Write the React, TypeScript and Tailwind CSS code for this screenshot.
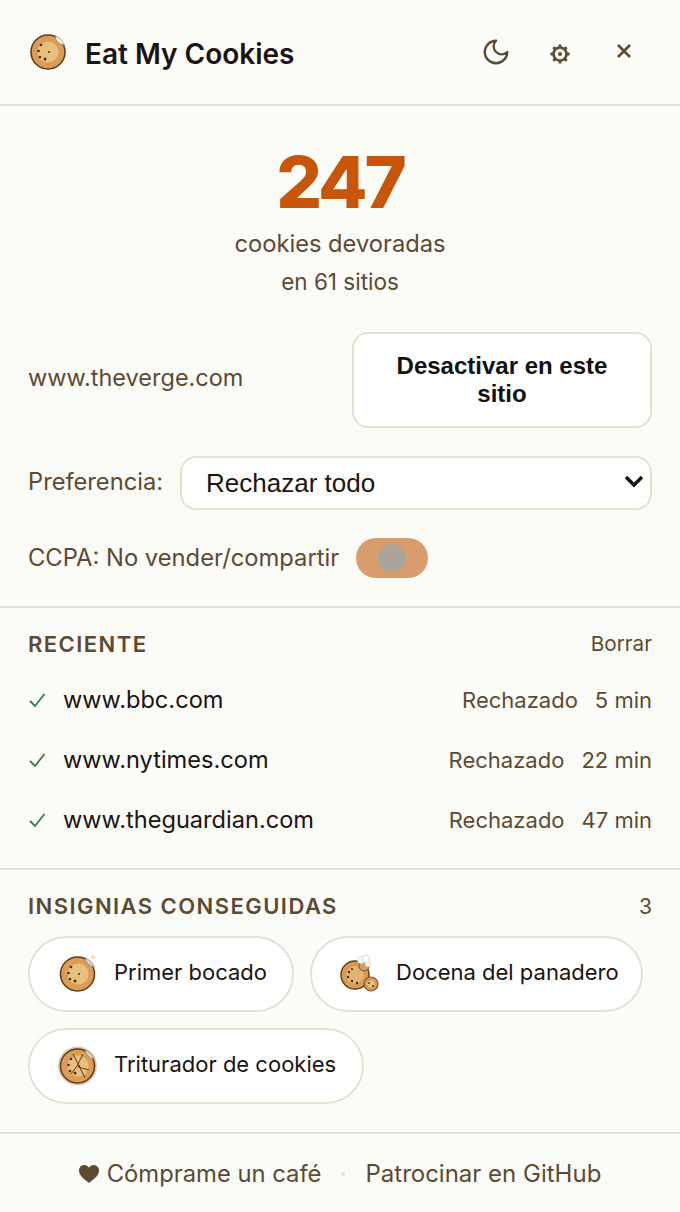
import React from "react";

function Cookie({ size = 40, variant = "plain" }: { size?: number; variant?: "plain" | "star" | "crack" }) {
  return (
    <svg width={size} height={size} viewBox="0 0 40 40" className="shrink-0">
      {variant === "crack" && <circle cx="19.500" cy="20" r="19.500" fill="#dccbb0" />}
      <circle cx={variant === "plain" ? 20 : 19.5} cy="20" r="17" fill="#dc9c55" stroke="#5c3d1e" strokeWidth="1.500" />
      <circle cx="20" cy="20" r="10.500" fill="#e8c07e" />
      <path d="M27 3.500 A17.500 17.500 0 0 1 36.500 13 A10 10 0 0 1 27 3.500 Z" fill={variant === "plain" ? "#f6f3ee" : "#d3d1cc"} stroke="#8a7760" strokeWidth="0.6" />
      {variant === "star" && <path d="M35 0l1 2.500 2.500 1-2.500 1-1 2.500-1-2.500-2.500-1 2.500-1z" fill="#f3dfaf" />}
      <g fill="#4a2d14">
        <circle cx="13" cy="13" r="1.300" />
        <circle cx="10.500" cy="19" r="1.300" />
        <circle cx="12" cy="25" r="1.300" />
        <circle cx="17" cy="27" r="1.500" />
        <circle cx="21" cy="20" r="1" />
      </g>
      {variant === "crack" && (
        <path d="M15 8l6 12 6 12M25 8L19 20l-6 8M20 21l11 3" fill="none" stroke="#5c3d1e" strokeWidth="1" />
      )}
    </svg>
  );
}

function BakerCookie() {
  return (
    <svg width="40" height="40" viewBox="0 0 40 40" className="shrink-0">
      <circle cx="15" cy="21" r="14" fill="#d99a55" stroke="#5c3d1e" strokeWidth="1.400" />
      <circle cx="15" cy="21" r="9" fill="#e3b372" />
      <g fill="#4a2d14">
        <circle cx="9" cy="18" r="1.200" />
        <circle cx="8" cy="23" r="1.200" />
        <circle cx="12" cy="27" r="1.200" />
        <circle cx="17" cy="29" r="1.200" />
        <circle cx="12" cy="15" r="1" />
      </g>
      <circle cx="24" cy="12" r="5" fill="#d99a55" stroke="#7a5630" strokeWidth="1" />
      <circle cx="21" cy="6" r="3.500" fill="#fdfcfa" stroke="#d8d2c8" strokeWidth="0.800" />
      <circle cx="26" cy="5" r="3.800" fill="#fdfcfa" stroke="#d8d2c8" strokeWidth="0.800" />
      <circle cx="28" cy="10" r="2.800" fill="#fdfcfa" stroke="#d8d2c8" strokeWidth="0.800" />
      <circle cx="31" cy="30" r="7" fill="#d99a55" stroke="#7a5630" strokeWidth="1.200" />
      <circle cx="31" cy="30" r="3.600" fill="#e9c384" />
      <circle cx="29" cy="29" r="0.900" fill="#4a2d14" />
      <circle cx="33" cy="32" r="0.900" fill="#4a2d14" />
    </svg>
  );
}

function Gear() {
  return (
    <svg width="20" height="20" viewBox="0 0 20 20" fill="none" stroke="#5c4a32">
      <circle cx="10" cy="10" r="6.500" strokeWidth="2.600" />
      <circle cx="10" cy="10" r="2" fill="#5c4a32" stroke="none" />
      <path d="M10 0.500v3.500M10 16v3.500M0.500 10h3.500M16 10h3.500M3.300 3.300l2.500 2.500M14.200 14.200l2.500 2.500M3.300 16.700l2.500-2.500M14.200 5.800l2.500-2.500" strokeWidth="2.800" />
    </svg>
  );
}

function Row({ site, time }: { site: string; time: string }) {
  return (
    <div className="flex h-[60px] items-center">
      <svg width="18" height="18" viewBox="0 0 18 18" fill="none" stroke="#2f7d46" strokeWidth="1.800" className="mr-[17px] shrink-0">
        <path d="M2 10l5 5L16.500 3" />
      </svg>
      <span className="flex-1 text-[23.600px] text-[#1c1410]">{site}</span>
      <span className="text-[22px] text-[#5c4a32]">Rechazado</span>
      <span className="ml-[17px] text-[22px] text-[#5c4a32]">{time}</span>
    </div>
  );
}

function Chip({ icon, label, pad }: { icon: React.ReactNode; label: string; pad: string }) {
  return (
    <div className={"flex h-[76px] items-center gap-[16px] rounded-full border-2 border-[#e8e0d4] bg-white pl-[28px] " + pad}>
      {icon}
      <span className="mb-[4px] text-[22px] text-[#1c1410]">{label}</span>
    </div>
  );
}

export default function App() {
  return (
    <div className="flex h-[1212px] w-[680px] flex-col overflow-hidden bg-[#fbfbf8] font-['Inter',sans-serif]">
      <header className="flex h-[106px] items-center border-b-2 border-[#e8e0d4] pl-[28px]">
        <Cookie size={40} />
        <h1 className="ml-[17px] mt-[4px] flex-1 text-[28px] font-semibold text-[#1c1410]">Eat My Cookies</h1>
        <svg width="30" height="30" viewBox="0 0 24 24" fill="none" stroke="#5c4a32" strokeWidth="1.900" strokeLinecap="round" strokeLinejoin="round" className="mr-[39px]">
          <path d="M12 3a6 6 0 0 0 9 9 9 9 0 1 1-9-9Z" />
        </svg>
        <div className="mr-[46px] mt-[4px] flex"><Gear /></div>
        <svg width="16" height="16" viewBox="0 0 16 16" fill="none" stroke="#5c4a32" strokeWidth="2.600" className="mb-[2px] mr-[48px]">
          <path d="M2 2l12 12M14 2L2 14" />
        </svg>
      </header>

      <section className="flex flex-col items-center pt-[36px]">
        <div className="text-[72px] font-extrabold leading-[80px] tracking-[-3px] text-[#c8560a]">247</div>
        <div className="mt-[4px] text-[23.700px] leading-[36px] text-[#5c4a32]">cookies devoradas</div>
        <div className="mt-[3px] text-[22.500px] leading-[34px] text-[#5c4a32]">en 61 sitios</div>
      </section>

      <section className="flex flex-col px-[28px] pt-[33px]">
        <div className="flex items-center justify-between">
          <span className="mb-[4px] text-[23.500px] text-[#5c4a32]">www.theverge.com</span>
          <button className="h-[96px] w-[300px] rounded-[16px] border-2 border-[#e8e0d4] bg-white px-[24px] font-['Liberation_Sans',sans-serif] text-[24px] font-bold leading-[28px] text-[#111]">
            Desactivar en este sitio
          </button>
        </div>
        <div className="mt-[28px] flex items-center gap-[17px]">
          <span className="mb-[2px] text-[23.700px] text-[#5c4a32]">Preferencia:</span>
          <div className="relative flex-1">
            <select className="h-[54px] w-full appearance-none rounded-[16px] border-2 border-[#e8e0d4] bg-white pl-[24px] font-['Liberation_Sans',sans-serif] text-[26px] text-[#1c1410]">
              <option>Rechazar todo</option>
            </select>
            <svg width="20" height="14" viewBox="0 0 20 14" fill="none" stroke="#1c1410" strokeWidth="3.400" className="pointer-events-none absolute right-[8px] top-[18px]">
              <path d="M2 3l8 8 8-8" />
            </svg>
          </div>
        </div>
        <div className="mt-[28px] flex items-center gap-[17px]">
          <span className="text-[23.760px] text-[#5c4a32]">CCPA: No vender/compartir</span>
          <div className="flex h-[40px] w-[72px] items-center justify-center rounded-full bg-[#d89c6d]">
            <div className="h-[28px] w-[28px] rounded-full bg-[#aaa598]" />
          </div>
        </div>
      </section>

      <section className="mt-[28px] border-t-2 border-[#e8e0d4] px-[28px] pt-[22px]">
        <div className="flex items-center justify-between">
          <h2 className="text-[22px] font-semibold leading-[28px] tracking-[1.450px] text-[#5c4a32]">RECIENTE</h2>
          <span className="text-[20.700px] leading-[28px] text-[#5c4a32]">Borrar</span>
        </div>
        <div className="mt-[12px] pb-[18px]">
          <Row site="www.bbc.com" time="5 min" />
          <Row site="www.nytimes.com" time="22 min" />
          <Row site="www.theguardian.com" time="47 min" />
        </div>
      </section>

      <section className="border-t-2 border-[#e8e0d4] px-[28px] pb-[28px] pt-[22px]">
        <div className="flex h-[28px] items-center justify-between">
          <h2 className="text-[22px] font-semibold leading-[28px] tracking-[1.450px] text-[#5c4a32]">INSIGNIAS CONSEGUIDAS</h2>
          <span className="mt-[2px] text-[21px] leading-[28px] text-[#5c4a32]">3</span>
        </div>
        <div className="mt-[16px] flex flex-wrap gap-[16px]">
          <Chip icon={<Cookie size={40} variant="star" />} label="Primer bocado" pad="pr-[25px]" />
          <Chip icon={<BakerCookie />} label="Docena del panadero" pad="pr-[22px]" />
          <Chip icon={<Cookie size={40} variant="crack" />} label="Triturador de cookies" pad="pr-[26px]" />
        </div>
      </section>

      <footer className="flex flex-1 items-center justify-center border-t-2 border-[#e8e0d4] pt-[2px] text-[23.800px] text-[#5c4a32]">
        <svg width="20" height="18" viewBox="0 0 20 18" fill="#5c4a32" className="mr-[8px]">
          <path d="M10 18C4 13.500 0 10 0 5.500 0 2.400 2.400 0 5.300 0 7.200 0 9 1 10 2.700 11 1 12.800 0 14.700 0 17.600 0 20 2.400 20 5.500 20 10 16 13.500 10 18Z" />
        </svg>
        <span>Cómprame un café</span>
        <span className="mx-[20px] h-[4px] w-[4px] rounded-full bg-[#e8e0d4]" />
        <span className="text-[24px]">Patrocinar en GitHub</span>
      </footer>
    </div>
  );
}
